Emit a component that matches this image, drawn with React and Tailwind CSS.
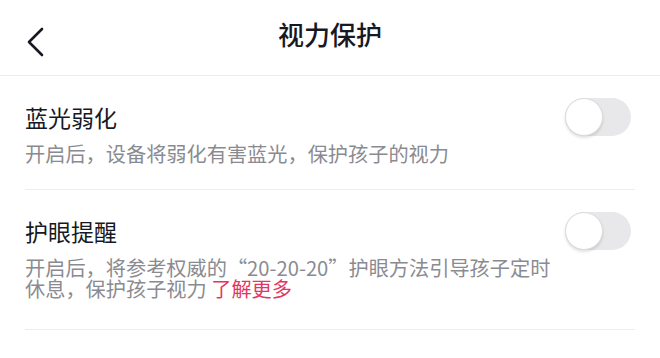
import { useState } from "react"

const font = "font-['Noto_Sans_CJK_SC','Noto_Sans',sans-serif]"

function Toggle({ on, onChange }) {
  return (
    <button
      type="button"
      onClick={() => onChange(!on)}
      className={`relative h-[38px] w-[66px] shrink-0 rounded-full ${on ? "bg-[#fe2c55]" : "bg-[#e8e8ea]"}`}>
      <span
        className={`absolute top-0 h-[38px] w-[38px] rounded-full border border-[#dcdcdc] bg-white shadow-[0_2px_3px_rgba(0,0,0,0.12)] ${on ? "left-[28px]" : "left-0"}`}
      />
    </button>
  )
}

function SettingRow({ title, children, on, onChange, className }) {
  return (
    <div className={`flex items-start justify-between border-b border-[#ededed] ${className}`}>
      <div className="w-[530px]">
        <div className="text-[23px] leading-[30px] text-[#161823]">{title}</div>
        <div className="mt-[11px] text-[20.2px] leading-[21px] text-[#8a8b91]">{children}</div>
      </div>
      <div className="mr-[4px] mt-[-4px]">
        <Toggle on={on} onChange={onChange} />
      </div>
    </div>
  )
}

export default function App() {
  const [blueLight, setBlueLight] = useState(false)
  const [eyeReminder, setEyeReminder] = useState(false)

  return (
    <div className={`h-[358px] w-[660px] overflow-hidden bg-white ${font}`}>
      <header className="relative flex h-[76px] items-center justify-center border-b border-[#ededed]">
        <button type="button" className="absolute left-[26px] top-[27px]">
          <svg width="20" height="30" viewBox="0 0 20 30" fill="none">
            <path d="M16 2 L3 15 L16 28" stroke="#161823" strokeWidth="2.6" strokeLinecap="round" strokeLinejoin="round" />
          </svg>
        </button>
        <h1 className="mt-[-8px] text-[26px] font-medium leading-[36px] text-[#161823]">视力保护</h1>
      </header>

      <div className="px-[25px]">
        <SettingRow title="蓝光弱化" on={blueLight} onChange={setBlueLight} className="pb-[25px] pt-[26px]">
          开启后，设备将弱化有害蓝光，保护孩子的视力
        </SettingRow>
        <SettingRow title="护眼提醒" on={eyeReminder} onChange={setEyeReminder} className="pb-[30px] pt-[26px]">
          开启后，将参考权威的“20-20-20”护眼方法引导孩子定时休息，保护孩子视力{" "}
          <a href="#" className="inline-block leading-[21px] text-[#e4365f]">了解更多</a>
        </SettingRow>
      </div>
    </div>
  )
}
